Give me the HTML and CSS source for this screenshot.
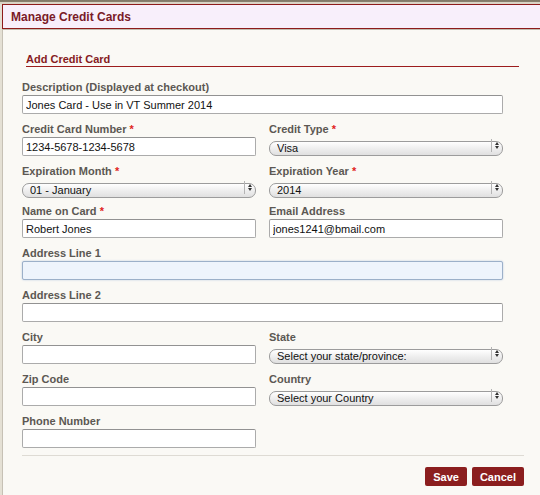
FILE: index.html
```html
<!DOCTYPE html>
<html lang="en">
<head>
<meta charset="utf-8">
<title>Manage Credit Cards</title>
<link rel="stylesheet" href="styles.css">
</head>
<body>
<div class="panel">
  <div class="panel-header">Manage Credit Cards</div>
  <div class="panel-body">
    <form class="card-form">
      <div class="section-title">Add Credit Card</div>
      <div class="form-grid">
        <div class="field span-2">
          <label class="field-label">Description (Displayed at checkout)</label>
          <input class="text-input" type="text" value="Jones Card - Use in VT Summer 2014">
        </div>

        <div class="field">
          <label class="field-label">Credit Card Number <span class="req">*</span></label>
          <input class="text-input" type="text" value="1234-5678-1234-5678">
        </div>
        <div class="field">
          <label class="field-label">Credit Type <span class="req">*</span></label>
          <div class="select-wrap">
            <select class="select-input"><option>Visa</option></select>
            <span class="select-arrows"><span class="arrow-up"></span><span class="arrow-down"></span></span>
          </div>
        </div>

        <div class="field field-select-row">
          <label class="field-label">Expiration Month <span class="req">*</span></label>
          <div class="select-wrap">
            <select class="select-input"><option>01 - January</option></select>
            <span class="select-arrows"><span class="arrow-up"></span><span class="arrow-down"></span></span>
          </div>
        </div>
        <div class="field field-select-row">
          <label class="field-label">Expiration Year <span class="req">*</span></label>
          <div class="select-wrap">
            <select class="select-input"><option>2014</option></select>
            <span class="select-arrows"><span class="arrow-up"></span><span class="arrow-down"></span></span>
          </div>
        </div>

        <div class="field">
          <label class="field-label">Name on Card <span class="req">*</span></label>
          <input class="text-input" type="text" value="Robert Jones">
        </div>
        <div class="field">
          <label class="field-label">Email Address</label>
          <input class="text-input" type="text" value="jones1241@bmail.com">
        </div>

        <div class="field span-2">
          <label class="field-label">Address Line 1</label>
          <input class="text-input is-focused" type="text" value="">
        </div>

        <div class="field span-2">
          <label class="field-label">Address Line 2</label>
          <input class="text-input" type="text" value="">
        </div>

        <div class="field">
          <label class="field-label">City</label>
          <input class="text-input" type="text" value="">
        </div>
        <div class="field">
          <label class="field-label">State</label>
          <div class="select-wrap">
            <select class="select-input"><option>Select your state/province:</option></select>
            <span class="select-arrows"><span class="arrow-up"></span><span class="arrow-down"></span></span>
          </div>
        </div>

        <div class="field">
          <label class="field-label">Zip Code</label>
          <input class="text-input" type="text" value="">
        </div>
        <div class="field">
          <label class="field-label">Country</label>
          <div class="select-wrap">
            <select class="select-input"><option>Select your Country</option></select>
            <span class="select-arrows"><span class="arrow-up"></span><span class="arrow-down"></span></span>
          </div>
        </div>

        <div class="field">
          <label class="field-label">Phone Number</label>
          <input class="text-input" type="text" value="">
        </div>
      </div>
      <div class="form-actions">
        <button class="btn" type="button">Save</button>
        <button class="btn" type="button">Cancel</button>
      </div>
    </form>
  </div>
</div>
</body>
</html>
```

FILE: styles.css
```css
html, body {
  margin: 0;
  padding: 0;
}

body {
  background: linear-gradient(#7f7766 0, #8a8270 2px, #d9d4c5 2px, #d9d4c5 4px, #e4e0d4 4px);
  font-family: "Liberation Sans", Arial, sans-serif;
  height: 495px;
  overflow: hidden;
}

.panel {
  margin: 4px 0 0 2px;
}

.panel-header {
  border: 1px solid #8e1b1b;
  border-right: none;
  background: #f8effb;
  height: 22px;
  padding-top: 1px;
  line-height: 23px;
  padding-left: 8px;
  color: #7a1a28;
  font-weight: bold;
  font-size: 12px;
}

.panel-body {
  border-left: 1px solid #c6c1b5;
  border-top: 1px solid #c2bcaf;
  background: #faf9f5;
  padding: 22px 16px 20px 19px;
}

.section-title {
  margin: 0 5px 0 4px;
  font-size: 11px;
  font-weight: bold;
  line-height: 14px;
  color: #861b22;
  border-bottom: 1px solid #9c1d1d;
}

.form-grid {
  margin: 13px 21px 0 0;
  display: grid;
  grid-template-columns: 234px 234px;
  column-gap: 13px;
  row-gap: 8px;
  align-items: start;
}

.span-2 {
  grid-column: 1 / span 2;
}

.field {
  display: flex;
  flex-direction: column;
}

.field-label {
  display: block;
  height: 14px;
  font-size: 11px;
  font-weight: bold;
  line-height: 14px;
  color: #5c5853;
  margin-bottom: 1px;
  white-space: nowrap;
}

.req {
  color: #e0241c;
  font-size: 11px;
  line-height: 14px;
}

.text-input {
  box-sizing: border-box;
  height: 19px;
  width: 100%;
  margin: 0;
  border: 1px solid #ababab;
  border-top-color: #929292;
  border-radius: 2px;
  padding: 0 3px;
  background: #fff;
  font-family: "Liberation Sans", Arial, sans-serif;
  font-size: 11px;
  color: #111;
  outline: none;
}

.text-input.is-focused {
  background: #eef4fc;
  border-color: #9cb0c9;
  box-shadow: 0 0 2px #b6c8e0;
}

.field-select-row .select-wrap {
  margin-bottom: 1px;
}

.select-wrap {
  position: relative;
  margin-top: 1px;
  height: 15px;
}

.select-input {
  appearance: none;
  -webkit-appearance: none;
  box-sizing: border-box;
  width: 100%;
  height: 15px;
  margin: 0;
  border: 1px solid #9c9c9c;
  border-radius: 7px;
  padding: 0 24px 0 7px;
  background: linear-gradient(#ffffff, #f0f0f0 45%, #e0e0e0);
  font-family: "Liberation Sans", Arial, sans-serif;
  font-size: 11px;
  line-height: 13px;
  color: #111;
  outline: none;
}

.select-arrows {
  position: absolute;
  top: 1px;
  right: 1px;
  width: 10px;
  height: 13px;
  border-left: 1px solid #b4b4b4;
  display: flex;
  flex-direction: column;
  align-items: center;
  justify-content: center;
  gap: 1px;
  pointer-events: none;
}

.arrow-up {
  width: 0;
  height: 0;
  border-left: 2px solid transparent;
  border-right: 2px solid transparent;
  border-bottom: 3px solid #333;
}

.arrow-down {
  width: 0;
  height: 0;
  border-left: 2px solid transparent;
  border-right: 2px solid transparent;
  border-top: 3px solid #333;
}

.form-actions {
  margin-top: 7px;
  border-top: 1px solid #dedbd4;
  padding-top: 11px;
  display: flex;
  justify-content: flex-end;
  gap: 5px;
}

.btn {
  height: 19px;
  padding: 0 8px;
  border: none;
  border-radius: 2px;
  background: #8b1e1e;
  color: #fff;
  font-family: "Liberation Sans", Arial, sans-serif;
  font-size: 11px;
  font-weight: bold;
  cursor: pointer;
}
```
